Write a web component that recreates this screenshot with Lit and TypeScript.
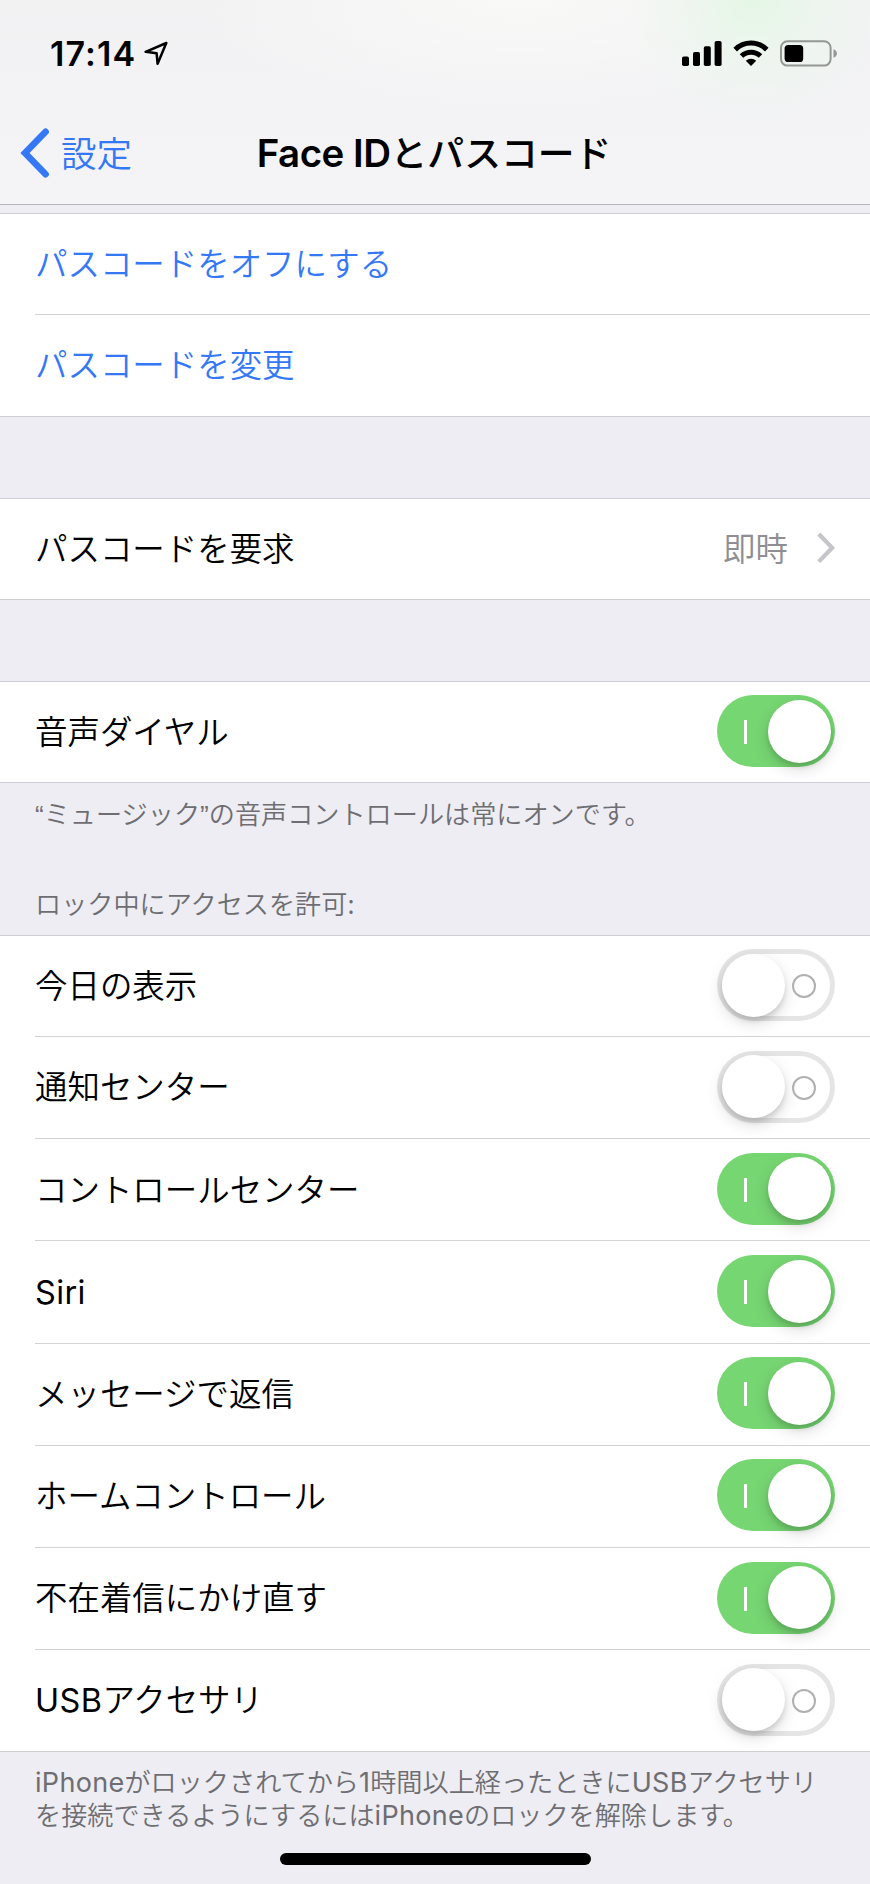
import { LitElement, html, css, svg } from "lit";
import { customElement, property } from "lit/decorators.js";
import { classMap } from "lit/directives/class-map.js";

@customElement("ios-switch")
class IosSwitch extends LitElement {
  @property({ type: Boolean }) on = false;

  static styles = css`
    :host { display: block; flex: none; }
    .track {
      box-sizing: border-box;
      display: flex;
      align-items: center;
      justify-content: space-between;
      width: 118px;
      height: 72px;
      border-radius: 36px;
      padding: 0 4.5px;
      background: #fff;
      box-shadow: inset 0 0 0 5px #e5e5e5;
    }
    .track.on { background: #76d672; box-shadow: none; flex-direction: row-reverse; }
    .knob {
      width: 63px;
      height: 63px;
      border-radius: 50%;
      background: #fff;
      box-shadow: 0 6px 16px rgba(0, 0, 0, 0.15), 0 4px 5px rgba(0, 0, 0, 0.11);
    }
    .bar { width: 3px; height: 24px; margin: 2px 0 0 22.5px; background: #fff; }
    .ring {
      box-sizing: border-box;
      width: 24px;
      height: 24px;
      margin: 2px 14.5px 0 0;
      border: 2.5px solid #b0b0b0;
      border-radius: 50%;
    }
  `;

  render() {
    return html`<div class=${classMap({ track: true, on: this.on })}>
      <div class="knob"></div>
      <div class=${this.on ? "bar" : "ring"}></div>
    </div>`;
  }
}

interface Row {
  label: unknown;
  link?: boolean;
  value?: string;
  on?: boolean;
}

const latin = (t: string) => html`<span class="latin">${t}</span>`;

const lockRows: Row[] = [
  { label: "今日の表示", on: false },
  { label: "通知センター", on: false },
  { label: "コントロールセンター", on: true },
  { label: latin("Siri"), on: true },
  { label: "メッセージで返信", on: true },
  { label: "ホームコントロール", on: true },
  { label: "不在着信にかけ直す", on: true },
  { label: html`${latin("USB")}アクセサリ`, on: false },
];

@customElement("app-root")
class AppRoot extends LitElement {
  static styles = css`
    :host {
      display: flex;
      flex-direction: column;
      width: 870px;
      height: 1884px;
      overflow: hidden;
      background: #eeedf3;
      color: #000;
      font-family: "Noto Sans CJK JP", sans-serif;
      font-weight: 350;
      font-size: 32.45px;
      line-height: 40px;
      white-space: nowrap;
    }
    .latin { font-family: Inter, sans-serif; font-weight: 400; line-height: 1; letter-spacing: 0.4px; }
    .quote { font-family: "Liberation Sans", sans-serif; line-height: 1; }
    svg { display: block; flex: none; }

    .top {
      box-sizing: border-box;
      height: 205px;
      flex: none;
      border-bottom: 1px solid #b5b5ba;
      background:
        radial-gradient(ellipse 130px 120px at 754px 0, #e4f6e5 0, rgba(234, 246, 235, 0.6) 50%, rgba(244, 245, 246, 0) 100%),
        radial-gradient(ellipse 330px 110px at 520px 0, #f9f9f8 0, rgba(247, 247, 247, 0) 100%),
        linear-gradient(#f2f2f3, #f4f4f7);
    }
    .status { display: flex; align-items: center; height: 107px; }
    .time {
      font: 600 34px/40px Inter, sans-serif;
      letter-spacing: 1.1px;
      width: 86px;
      padding-left: 50px;
    }
    .loc { margin: 0 0 1px 8px; }
    .indicators { margin: 0 32px 1px auto; }
    .nav {
      display: grid;
      grid-template-columns: 1fr auto 1fr;
      align-items: center;
      height: 92px;
    }
    .back { display: flex; align-items: center; gap: 11px; padding-left: 19px; color: #3478f6; font-size: 35.5px; }
    .back-label { padding-bottom: 3px; }
    .title { font-weight: 500; font-size: 36.8px; margin-left: -2px; padding-bottom: 2px; }
    .title .latin { font-weight: 600; font-size: 38.5px; letter-spacing: -0.5px; }

    .group { flex: none; margin-top: 81px; background: #fff; border-top: 1px solid #cfced3; border-bottom: 1px solid #cfced3; }
    .group.first { margin-top: 8px; }
    .row {
      box-sizing: border-box;
      display: flex;
      align-items: center;
      height: 102.17px;
      margin-left: 35px;
      padding: 0 35px 2px 0;
      border-top: 1px solid #d3d2d6;
    }
    .row:first-child { height: 100px; border-top: none; }
    .label { flex: 1; padding-bottom: 2.5px; }
    .link { color: #3478f6; }
    .value { color: #8e8e93; margin-right: 29px; padding-bottom: 3px; }
    .note, .head { color: #6d6d72; font-size: 26.15px; line-height: 32.5px; }
    .note .latin { font-size: 27px; letter-spacing: 0.3px; }
    .between {
      box-sizing: border-box;
      flex: none;
      display: flex;
      flex-direction: column;
      justify-content: space-between;
      height: 152px;
      padding: 13.5px 35px 15.5px;
    }
    .group.locked { margin-top: 0; }
    .final { padding: 13px 35px 0; }
    .home { width: 311px; height: 12px; border-radius: 6px; background: #000; margin: auto auto 19px 280px; }
  `;

  private row(r: Row) {
    return html`<div class="row">
      <div class=${classMap({ label: true, link: !!r.link })}>${r.label}</div>
      ${r.value
        ? html`<div class="value">${r.value}</div>
            <svg width="18" height="32" viewBox="0 0 18 32" fill="none" stroke="#c5c5ca" stroke-width="4.2">
              <path d="M1.8 2 15.2 15.8 1.8 29.6" />
            </svg>`
        : ""}
      ${r.on === undefined ? "" : html`<ios-switch ?on=${r.on}></ios-switch>`}
    </div>`;
  }

  private indicators() {
    return svg`<svg class="indicators" width="156" height="28" viewBox="682 39 156 28">
      <rect x="682" y="56.5" width="7" height="9.5" rx="1.8" />
      <rect x="693" y="52" width="7" height="14" rx="1.8" />
      <rect x="703.8" y="46.3" width="7" height="19.7" rx="1.8" />
      <rect x="714.6" y="41" width="7" height="25" rx="1.8" />
      <g fill="none" stroke="#000" stroke-width="5">
        <path d="M735.2 49.6a22.5 22.5 0 0 1 31.6 0" />
        <path d="M741.5 56a13.6 13.6 0 0 1 19 0" />
      </g>
      <path d="M751 66l-5.2-5.2a7.4 7.4 0 0 1 10.4 0z" />
      <rect x="781" y="41.2" width="49.6" height="24.4" rx="6.5" fill="none" stroke="#949794" stroke-width="2" />
      <rect x="784.6" y="45" width="18.6" height="17" rx="3.6" />
      <path d="M833.5 49.2q3.4 1.5 3.4 4.3t-3.4 4.3z" fill="#949794" />
    </svg>`;
  }

  render() {
    return html`
      <header class="top">
        <div class="status">
          <div class="time">17:14</div>
          <svg class="loc" width="25" height="25" viewBox="144 41 25 25" fill="none" stroke="#000" stroke-width="2.5" stroke-linejoin="round">
            <path d="M166.3 43 145.6 51.8 156.6 53.2 157.6 63.8z" />
          </svg>
          ${this.indicators()}
        </div>
        <div class="nav">
          <div class="back">
            <svg width="31" height="50" viewBox="0 0 31 50" fill="none" stroke="#3478f6" stroke-width="6.6" stroke-linecap="round" stroke-linejoin="miter">
              <path d="M26.6 3.8 6 25 26.6 46.2" />
            </svg>
            <span class="back-label">設定</span>
          </div>
          <div class="title">${latin("Face ID")}とパスコード</div>
        </div>
      </header>
      <section class="group first">
        ${this.row({ label: "パスコードをオフにする", link: true })}
        ${this.row({ label: "パスコードを変更", link: true })}
      </section>
      <section class="group">${this.row({ label: "パスコードを要求", value: "即時" })}</section>
      <section class="group">${this.row({ label: "音声ダイヤル", on: true })}</section>
      <div class="between">
        <div class="note"><span class="quote">“</span>ミュージック<span class="quote">”</span>の音声コントロールは常にオンです。</div>
        <div class="head">ロック中にアクセスを許可:</div>
      </div>
      <section class="group locked">${lockRows.map((r) => this.row(r))}</section>
      <div class="note final">
        ${latin("iPhone")}がロックされてから${latin("1")}時間以上経ったときに${latin("USB")}アクセサリ<br />を接続できるようにするには${latin("iPhone")}のロックを解除します。
      </div>
      <div class="home"></div>
    `;
  }
}
